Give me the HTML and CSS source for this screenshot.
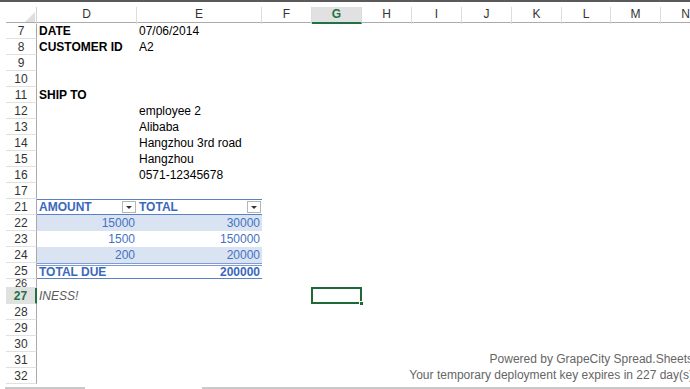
FILE: index.html
```html
<!DOCTYPE html>
<html lang="en">
<head>
  <meta charset="UTF-8" />
  <title>Invoice - Spread.Sheets</title>
  <link rel="stylesheet" href="styles.css">
</head>
<body>
  <div class="spread">
    <div class="col-heads">
      <div class="corner"><span class="corner-tri"></span></div>
      <div class="ch">D</div>
      <div class="ch">E</div>
      <div class="ch">F</div>
      <div class="ch active">G</div>
      <div class="ch">H</div>
      <div class="ch">I</div>
      <div class="ch">J</div>
      <div class="ch">K</div>
      <div class="ch">L</div>
      <div class="ch">M</div>
      <div class="ch">N</div>
    </div>

    <div class="row"><div class="rh">7</div><div class="c b">DATE</div><div class="c">07/06/2014</div></div>
    <div class="row"><div class="rh">8</div><div class="c b">CUSTOMER ID</div><div class="c">A2</div></div>
    <div class="row"><div class="rh">9</div></div>
    <div class="row"><div class="rh">10</div></div>
    <div class="row"><div class="rh">11</div><div class="c b">SHIP TO</div></div>
    <div class="row"><div class="rh">12</div><div class="c"></div><div class="c">employee 2</div></div>
    <div class="row"><div class="rh">13</div><div class="c"></div><div class="c">Alibaba</div></div>
    <div class="row"><div class="rh">14</div><div class="c"></div><div class="c">Hangzhou 3rd road</div></div>
    <div class="row"><div class="rh">15</div><div class="c"></div><div class="c">Hangzhou</div></div>
    <div class="row"><div class="rh">16</div><div class="c"></div><div class="c">0571-12345678</div></div>
    <div class="row"><div class="rh">17</div></div>

    <!-- invoice table -->
    <div class="row">
      <div class="rh">21</div>
      <div class="c t-head">AMOUNT <span class="filter"></span></div>
      <div class="c t-head">TOTAL <span class="filter"></span></div>
    </div>
    <div class="row">
      <div class="rh">22</div>
      <div class="c num band">15000</div>
      <div class="c num band">30000</div>
    </div>
    <div class="row">
      <div class="rh">23</div>
      <div class="c num">1500</div>
      <div class="c num">150000</div>
    </div>
    <div class="row">
      <div class="rh">24</div>
      <div class="c num band">200</div>
      <div class="c num band">20000</div>
    </div>
    <div class="row">
      <div class="rh">25</div>
      <div class="c t-total">TOTAL DUE</div>
      <div class="c t-total num">200000</div>
    </div>

    <div class="row short"><div class="rh">26</div></div>
    <div class="row">
      <div class="rh active">27</div>
      <div class="c note">INESS!</div>
      <div class="c"></div>
      <div class="c"></div>
      <div class="c sel"><div class="sel-box"><span class="sel-handle"></span></div></div>
    </div>
    <div class="row"><div class="rh">28</div></div>
    <div class="row"><div class="rh">29</div></div>
    <div class="row"><div class="rh">30</div></div>
    <div class="row"><div class="rh">31</div></div>
    <div class="row"><div class="rh">32</div></div>

    <div class="bottom-bars">
      <div class="tab-strip"></div>
      <div class="hscroll"></div>
    </div>
  </div>

  <div class="watermark">
    <div>Powered by GrapeCity Spread.Sheets</div>
    <div>Your temporary deployment key expires in 227 day(s)</div>
  </div>
</body>
</html>
```

FILE: styles.css
```css
* {
  margin: 0;
  padding: 0;
  box-sizing: border-box;
}

body {
  width: 690px;
  height: 389px;
  overflow: hidden;
  position: relative;
  background-color: #fff;
  border-top: 2px solid #5a5a5a;
  font-family: 'Liberation Sans', Arial, sans-serif;
  font-size: 12px;
  color: #000;
}

.spread {
  padding: 5px 0 0 6px;
}

/* same column widths for header and every row */
.col-heads,
.row {
  display: grid;
  grid-template-columns: 31px 100px 125px 50px 50px 50px 50px 50px 50px 49px 50px 50px 50px;
}

.col-heads {
  height: 16px;
  border-bottom: 1px solid #ababab;
}

.corner {
  border-right: 1px solid #d4d4d4;
  position: relative;
}

.corner-tri {
  position: absolute;
  right: 1px;
  bottom: 2px;
  width: 0;
  height: 0;
  border-left: 10px solid transparent;
  border-bottom: 10px solid #dedede;
}

.ch {
  text-align: center;
  line-height: 15px;
  color: #333;
  border-right: 1px solid #dcdcdc;
}

.ch.active {
  background-color: #e1e1e1;
  color: #217346;
  font-weight: bold;
  border-bottom: 2px solid #217346;
}

.row {
  height: 16px;
}

.row.short {
  height: 9px;
}

.rh {
  text-align: center;
  line-height: 16px;
  color: #333;
  border-right: 1px solid #a8a8a8;
  border-bottom: 1px solid #dde3dd;
  overflow: hidden;
}

.short .rh {
  line-height: 9px;
  font-size: 11px;
}

.rh.active {
  background-color: #e1e1e1;
  color: #217346;
  font-weight: bold;
  border-right: 2px solid #217346;
}

.c {
  line-height: 16px;
  padding: 0 2px;
  white-space: nowrap;
}

.b {
  font-weight: bold;
}

/* table styling */
.t-head {
  display: flex;
  justify-content: space-between;
  align-items: center;
  color: #3a68bd;
  font-weight: bold;
  border-top: 1px solid #5a80c8;
  border-bottom: 1px solid #5a80c8;
  line-height: 14px;
  padding-right: 1px;
}

.filter {
  width: 14px;
  height: 12px;
  border: 1px solid #b5b5b5;
  background-color: #fff;
  display: flex;
  align-items: center;
  justify-content: center;
}

.filter::after {
  content: "";
  border-left: 3px solid transparent;
  border-right: 3px solid transparent;
  border-top: 3px solid #333;
}

.num {
  text-align: right;
  color: #4472c4;
}

.band {
  background-color: #dae3f2;
}

.t-total {
  color: #3a68bd;
  font-weight: bold;
  border-top: 3px double #7d9bd6;
  border-bottom: 1px solid #5a80c8;
  line-height: 12px;
}

.note {
  font-style: italic;
  color: #5a5a5a;
}

.sel {
  position: relative;
}

.sel-box {
  position: absolute;
  top: -1px;
  left: -1px;
  right: 0;
  bottom: 0;
  border: 2px solid #1d6a37;
}

.sel-handle {
  position: absolute;
  right: -4px;
  bottom: -4px;
  width: 5px;
  height: 5px;
  background-color: #1d6a37;
  border: 1px solid #fff;
}

.bottom-bars {
  display: flex;
  margin: 3px 0 0 -1px;
  height: 3px;
}

.tab-strip {
  width: 80px;
  background-color: #cacaca;
}

.hscroll {
  flex: 1;
  margin-left: 117px;
  background-color: #cacaca;
}

/* deployment notice over the sheet */
.watermark {
  position: absolute;
  right: -3px;
  top: 349px;
  text-align: right;
  color: #666;
  font-size: 12px;
  line-height: 16px;
  white-space: nowrap;
}
```
